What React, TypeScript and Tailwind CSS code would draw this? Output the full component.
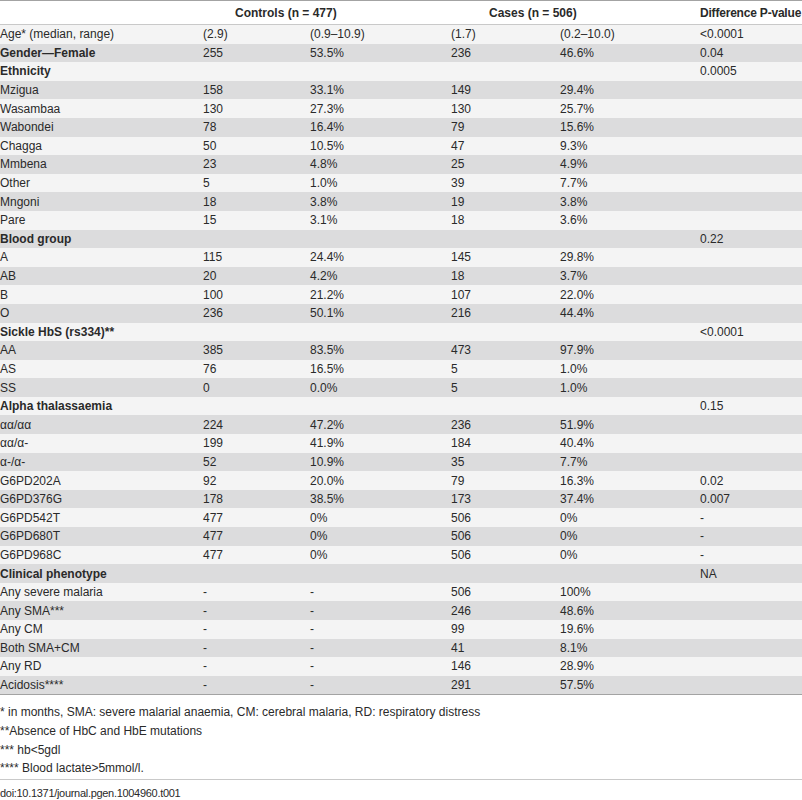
const rows: [string, string, string, string, string, string, boolean?][] = [
  ['Age* (median, range)', '(2.9)', '(0.9–10.9)', '(1.7)', '(0.2–10.0)', '<0.0001'],
  ['Gender—Female', '255', '53.5%', '236', '46.6%', '0.04', true],
  ['Ethnicity', '', '', '', '', '0.0005', true],
  ['Mzigua', '158', '33.1%', '149', '29.4%', ''],
  ['Wasambaa', '130', '27.3%', '130', '25.7%', ''],
  ['Wabondei', '78', '16.4%', '79', '15.6%', ''],
  ['Chagga', '50', '10.5%', '47', '9.3%', ''],
  ['Mmbena', '23', '4.8%', '25', '4.9%', ''],
  ['Other', '5', '1.0%', '39', '7.7%', ''],
  ['Mngoni', '18', '3.8%', '19', '3.8%', ''],
  ['Pare', '15', '3.1%', '18', '3.6%', ''],
  ['Blood group', '', '', '', '', '0.22', true],
  ['A', '115', '24.4%', '145', '29.8%', ''],
  ['AB', '20', '4.2%', '18', '3.7%', ''],
  ['B', '100', '21.2%', '107', '22.0%', ''],
  ['O', '236', '50.1%', '216', '44.4%', ''],
  ['Sickle HbS (rs334)**', '', '', '', '', '<0.0001', true],
  ['AA', '385', '83.5%', '473', '97.9%', ''],
  ['AS', '76', '16.5%', '5', '1.0%', ''],
  ['SS', '0', '0.0%', '5', '1.0%', ''],
  ['Alpha thalassaemia', '', '', '', '', '0.15', true],
  ['αα/αα', '224', '47.2%', '236', '51.9%', ''],
  ['αα/α-', '199', '41.9%', '184', '40.4%', ''],
  ['α-/α-', '52', '10.9%', '35', '7.7%', ''],
  ['G6PD202A', '92', '20.0%', '79', '16.3%', '0.02'],
  ['G6PD376G', '178', '38.5%', '173', '37.4%', '0.007'],
  ['G6PD542T', '477', '0%', '506', '0%', '-'],
  ['G6PD680T', '477', '0%', '506', '0%', '-'],
  ['G6PD968C', '477', '0%', '506', '0%', '-'],
  ['Clinical phenotype', '', '', '', '', 'NA', true],
  ['Any severe malaria', '-', '-', '506', '100%', ''],
  ['Any SMA***', '-', '-', '246', '48.6%', ''],
  ['Any CM', '-', '-', '99', '19.6%', ''],
  ['Both SMA+CM', '-', '-', '41', '8.1%', ''],
  ['Any RD', '-', '-', '146', '28.9%', ''],
  ['Acidosis****', '-', '-', '291', '57.5%', ''],
]

const cols = 'grid grid-cols-[203px_107px_141px_109px_140px_102px]'

export default function App() {
  return (
    <div className="w-[802px] h-[800px] bg-white text-[#2a2a2a] text-[12px] font-['Liberation_Sans',Arial,sans-serif] overflow-hidden">
      <div className="border-t border-[#a3a3a3]">
        <div className={`${cols} h-[24px] items-center font-bold border-b border-[#c9c9c9]`}>
          <div></div>
          <div className="col-span-2 pl-[32px]">Controls (n = 477)</div>
          <div className="col-span-2 pl-[38px]">Cases (n = 506)</div>
          <div className="whitespace-nowrap tracking-[-0.2px]">Difference P-value</div>
        </div>
        {rows.map((r, i) => (
          <div
            key={i}
            className={`${cols} h-[18.6px] items-center whitespace-nowrap ${i % 2 ? 'bg-[#dcdcdd]' : 'bg-[#f4f4f4]'}`}
          >
            <div className={r[6] ? 'font-bold' : ''}>{r[0]}</div>
            <div>{r[1]}</div>
            <div>{r[2]}</div>
            <div>{r[3]}</div>
            <div>{r[4]}</div>
            <div>{r[5]}</div>
          </div>
        ))}
      </div>
      <div className="border-t border-[#a3a3a3] pt-[8px] pb-[1px] border-b border-b-[#c9c9c9] leading-[18.7px]">
        <p>* in months, SMA: severe malarial anaemia, CM: cerebral malaria, RD: respiratory distress</p>
        <p>**Absence of HbC and HbE mutations</p>
        <p>*** hb&lt;5gdl</p>
        <p>**** Blood lactate&gt;5mmol/l.</p>
      </div>
      <p className="pt-[6px] text-[11px] leading-[14px] tracking-[-0.3px]">doi:10.1371/journal.pgen.1004960.t001</p>
    </div>
  )
}
